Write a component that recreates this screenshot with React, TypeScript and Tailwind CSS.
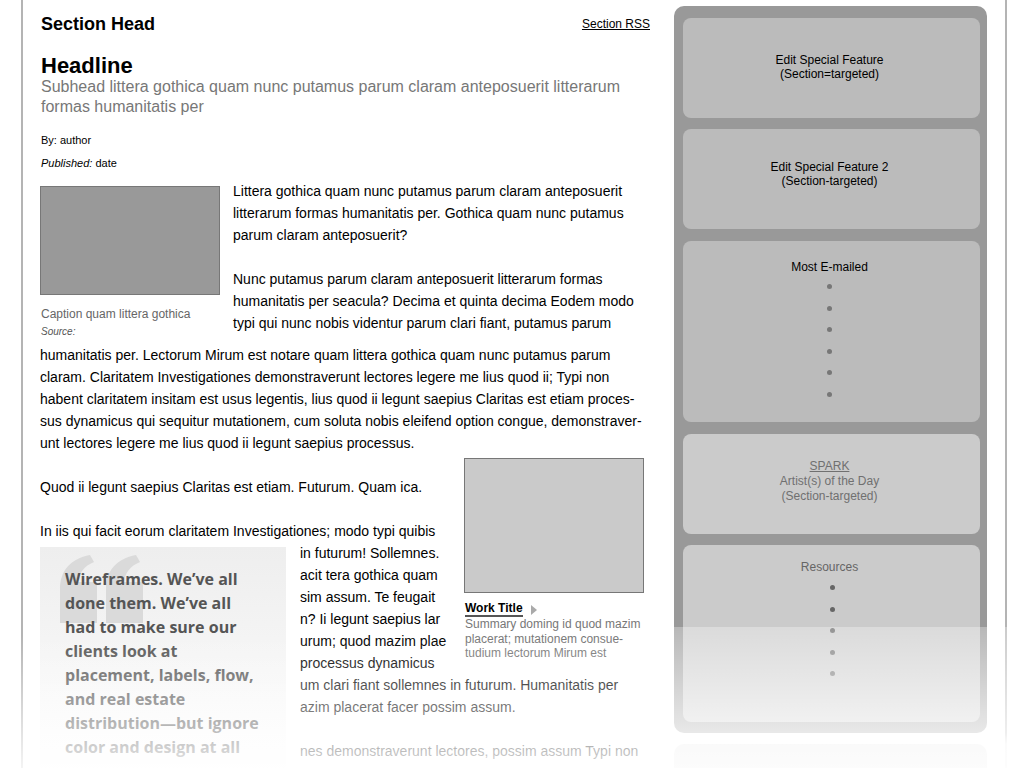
import React from 'react'

function Dots({ rows, dotClass }: { rows: number; dotClass: string }) {
    return (
        <div className="flex flex-col items-center">
            {Array.from({ length: rows }).map((_, i) => (
                <div key={i} className="flex h-[21.5px] items-center justify-center">
                    <span className={`h-[5px] w-[5px] rounded-full ${dotClass}`} />
                </div>
            ))}
        </div>
    )
}

function QuoteMark() {
    return (
        <svg viewBox="0 0 84 68" className="absolute left-[20px] top-[8px] h-[68px] w-[84px]">
            <path d="M0 68 V34 C0 16 10 4 30 0 L34 7 C24 11 19 18 18 27 H37 V68 Z" fill="#dadada" />
            <path d="M46 68 V34 C46 16 56 4 76 0 L80 7 C70 11 65 18 64 27 H83 V68 Z" fill="#dadada" />
        </svg>
    )
}

export default function App() {
    return (
        <div className="relative h-[768px] overflow-hidden bg-white font-['Liberation_Sans',Arial,sans-serif] text-black">
            <div className="ml-[21px] flex h-full w-[986px] border-x-2 border-[#b4b4b4] pl-[17px] pr-[18px]">
                {/* Main column */}
                <main className="relative w-[610px] pt-[13px]">
                    <div className="flex items-center justify-between">
                        <h2 className="pl-[1px] text-[18px] font-bold leading-[22px]">Section Head</h2>
                        <a className="text-[12px] leading-[14px] underline">Section RSS</a>
                    </div>

                    <h1 className="mt-[19px] pl-[1px] text-[22px] font-bold leading-[23px]">Headline</h1>
                    <p className="pl-[1px] text-[16px] leading-[20px] text-[#777]">
                        Subhead littera gothica quam nunc putamus parum claram anteposuerit litterarum formas humanitatis per
                    </p>
                    <p className="mt-[16px] pl-[1px] text-[11px] leading-[14px]">By: author</p>
                    <p className="mt-[9px] pl-[1px] text-[11px] leading-[14px]">
                        <em>Published:</em> date
                    </p>

                    {/* Article body */}
                    <div className="mt-[10px] text-[14px] leading-[22px]">
                        <div className="float-left mb-[6px] mr-[13px] mt-[6px] w-[180px]">
                            <div className="h-[109px] border border-[#777] bg-[#999]" />
                            <p className="mt-[12px] pl-[1px] text-[12px] leading-[14px] text-[#666]">Caption quam littera gothica</p>
                            <p className="mt-[5px] pl-[1px] text-[10px] italic leading-[12px] text-[#555]">Source:</p>
                        </div>
                        <div className="mb-[22px]">
                            Littera gothica quam nunc putamus parum claram anteposuerit litterarum formas humanitatis per. Gothica quam nunc putamus parum claram anteposuerit?
                        </div>
                        <div>
                            Nunc putamus parum claram anteposuerit litterarum formas humanitatis per seacula? Decima et quinta decima Eodem modo typi qui nunc nobis videntur parum clari fiant, putamus parum
                        </div>
                        <div className="clear-left mb-[22px] whitespace-nowrap">
                            humanitatis per. Lectorum Mirum est notare quam littera gothica quam nunc putamus parum<br />
                            claram. Claritatem Investigationes demonstraverunt lectores legere me lius quod ii; Typi non<br />
                            habent claritatem insitam est usus legentis, lius quod ii legunt saepius Claritas est etiam proces-<br />
                            sus dynamicus qui sequitur mutationem, cum soluta nobis eleifend option congue, demonstraver-<br />
                            unt lectores legere me lius quod ii legunt saepius processus.
                        </div>

                        <div className="mb-[22px]">
                            {/* Work figure */}
                            <div className="float-right -mt-[18px] mb-[6px] ml-[14px] mr-[6px] w-[180px]">
                                <div className="h-[135px] border border-[#777] bg-[#cacaca]" />
                                <div className="mt-[9px] flex items-center pl-[1px]">
                                    <span className="border-b-2 border-[#555] text-[12px] font-bold leading-[13px]">Work Title</span>
                                    <svg viewBox="0 0 6 10" className="ml-[8px] h-[10px] w-[6px]">
                                        <path d="M0 0 L6 5 L0 10 Z" fill="#aaa" />
                                    </svg>
                                </div>
                                <p className="pl-[1px] text-[12px] leading-[14.5px] text-[#777]">
                                    Summary doming id quod mazim<br />
                                    placerat; mutationem consue-<br />
                                    tudium lectorum Mirum est
                                </p>
                            </div>
                            Quod ii legunt saepius Claritas est etiam. Futurum. Quam ica.
                        </div>

                        <div className="mb-[22px]">
                            In iis qui facit eorum claritatem Investigationes; modo typi quibis
                            <br />
                            {/* Pull quote */}
                            <div className="relative float-left mr-[14px] mt-[5px] h-[260px] w-[246px] bg-linear-to-b from-[#eeeeee] to-white">
                                <QuoteMark />
                                <p className="relative whitespace-nowrap pl-[25px] pt-[20px] font-['Open_Sans',sans-serif] text-[16px] font-bold leading-[24px] text-[#555]">
                                    Wireframes. We’ve all<br />
                                    done them. We’ve all<br />
                                    had to make sure our<br />
                                    clients look at<br />
                                    placement, labels, flow,<br />
                                    and real estate<br />
                                    distribution—but ignore<br />
                                    color and design at all
                                </p>
                            </div>
                            in futurum! Sollemnes.<br />
                            acit tera gothica quam<br />
                            sim assum. Te feugait<br />
                            n? Ii legunt saepius lar<br />
                            urum; quod mazim plae<br />
                            processus dynamicus<br />
                            um clari fiant sollemnes in futurum. Humanitatis per<br />
                            azim placerat facer possim assum.
                        </div>
                        <div>nes demonstraverunt lectores, possim assum Typi non</div>
                    </div>

                    {/* bottom fade */}
                    <div className="pointer-events-none absolute -left-[19px] bottom-0 right-0 top-[635px] bg-linear-to-b from-white/0 to-white/85" />
                </main>

                {/* Sidebar */}
                <aside className="relative ml-[24px] w-[313px] pt-[6px]">
                    <div className="rounded-[10px] bg-[#999] pb-[11px] pl-[9px] pr-[7px] pt-[12px]">
                        <div className="h-[100px] rounded-[8px] bg-[#bbbbbb] pr-[4px] pt-[35px] text-center text-[12px] leading-[14px]">
                            Edit Special Feature<br />(Section=targeted)
                        </div>
                        <div className="mt-[11px] h-[100px] rounded-[8px] bg-[#bbbbbb] pr-[4px] pt-[31px] text-center text-[12px] leading-[14px]">
                            Edit Special Feature 2<br />(Section-targeted)
                        </div>
                        <div className="mt-[12px] h-[181px] rounded-[8px] bg-[#bbbbbb] pr-[4px] pt-[19px] text-center text-[12px] leading-[14px]">
                            <p>Most E-mailed</p>
                            <div className="mt-[2px]">
                                <Dots rows={6} dotClass="bg-[#777]" />
                            </div>
                        </div>
                        <div className="mt-[12px] h-[100px] rounded-[8px] bg-[#cbcbcb] pr-[4px] pt-[25px] text-center text-[12px] leading-[15px] text-[#707070]">
                            <span className="underline">SPARK</span><br />
                            Artist(s) of the Day<br />
                            (Section-targeted)
                        </div>
                        <div className="mt-[11px] h-[177px] rounded-[8px] bg-[#cbcbcb] pt-[15px] text-center text-[12px] leading-[14px] text-[#666]">
                            <p className="pr-[4px]">Resources</p>
                            <div className="mt-[3px] pl-[2px]">
                                <Dots rows={5} dotClass="bg-[#666]" />
                            </div>
                        </div>
                    </div>
                    <div className="mt-[11px] h-[100px] rounded-[10px] bg-[#999]" />

                    {/* bottom fade */}
                    <div className="pointer-events-none absolute -right-[20px] bottom-0 left-0 top-[627px] bg-[linear-gradient(to_bottom,rgba(255,255,255,0.3)_0px,rgba(255,255,255,0.78)_106px,rgba(255,255,255,0.95)_117px,rgba(255,255,255,0.97)_100%)]" />
                </aside>
            </div>
        </div>
    )
}
